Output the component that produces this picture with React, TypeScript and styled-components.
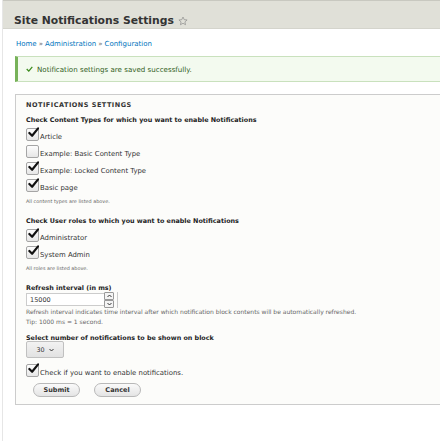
import styled, { createGlobalStyle } from "styled-components";

const GlobalStyle = createGlobalStyle`
  html, body {
    margin: 0;
    padding: 0;
    overflow: hidden;
    background: #ffffff;
  }
  body {
    font-family: "DejaVu Sans", "Liberation Sans", sans-serif;
    color: #333;
  }
`;

const Page = styled.div`
  width: 438px;
  overflow: hidden;
  border-left: 1px solid #e6e6e6;
  margin-left: 2px;
  min-height: 441px;
`;

const Header = styled.div`
  background: #e0e0d8;
  border-top: 1px solid #c8c8c0;
  border-bottom: 1px solid #d4d4cc;
  height: 29px;
  display: flex;
  align-items: center;
  padding: 12px 0 0 14px;
  box-sizing: border-box;
  margin-left: -3px;
`;

const Title = styled.h1`
  margin: 0;
  font-size: 10.8px;
  font-weight: bold;
  color: #333;
  display: flex;
  align-items: center;
  gap: 4px;
`;

const Breadcrumb = styled.div`
  margin: 11px 0 0 13px;
  font-size: 7px;
  color: #0074bd;
  display: flex;
  gap: 2px;
  span.sep {
    color: #666;
  }
`;

const Message = styled.div`
  margin: 8px -4px 0 12px;
  height: 26px;
  box-sizing: border-box;
  background: #f3faef;
  border: 1px solid #c9e1bd;
  border-left: 3px solid #77b259;
  display: flex;
  align-items: center;
  padding-left: 8px;
  font-size: 7.1px;
  color: #325e1c;
  gap: 4px;
`;

const Fieldset = styled.fieldset`
  margin: 12px -4px 0 12px;
  padding: 6px 0 8px 10px;
  border: 1px solid #ccc;
  background: #fcfcfa;
  height: 311px;
  box-sizing: border-box;
`;

const Legend = styled.div`
  font-size: 6.5px;
  font-weight: bold;
  text-transform: uppercase;
  letter-spacing: 0.5px;
  color: #333;
  margin-bottom: 7px;
`;

const Label = styled.div`
  font-size: 6.4px;
  font-weight: bold;
  color: #222;
`;

const Group = styled.div<{ gap?: number }>`
  margin-bottom: ${(p) => p.gap ?? 10}px;
`;

const CheckRow = styled.label`
  display: flex;
  align-items: flex-end;
  height: 17px;
  font-size: 6.9px;
  color: #333;
`;

const Box = styled.span`
  position: relative;
  width: 11px;
  height: 11px;
  border: 1px solid #a5a5a5;
  border-radius: 2px;
  background: linear-gradient(#fdfdfd, #e6e6e6);
  margin-right: 1px;
  flex-shrink: 0;
`;

const Tick = styled.svg`
  position: absolute;
  left: 1px;
  top: -2px;
`;

const Desc = styled.div`
  font-size: 4.9px;
  color: #666;
  margin-top: 6px;
`;

const Help = styled.div`
  font-size: 6px;
  color: #666;
  line-height: 10px;
`;

const NumberWrap = styled.div`
  display: flex;
  align-items: center;
  height: 13px;
  margin: 1px 0 1px;
`;

const NumberInput = styled.div`
  width: 74px;
  height: 11px;
  border: 1px solid #ccc;
  background: #fff;
  font-size: 6.5px;
  color: #333;
  display: flex;
  align-items: center;
  padding-left: 3px;
`;

const Spinner = styled.div`
  display: flex;
  flex-direction: column;
  margin-left: -1px;
  border-right: 1px solid #ccc;
  padding-right: 3px;
`;

const SpinBtn = styled.div`
  width: 8px;
  height: 6px;
  border: 1px solid #999;
  border-radius: 1px;
  background: #f4f4f4;
  display: flex;
  align-items: center;
  justify-content: center;
`;

const SelectBox = styled.div`
  width: 36px;
  height: 15px;
  border: 1px solid #c0c0c0;
  border-radius: 2px;
  background: linear-gradient(#f2f2f2, #e2e2e2);
  font-size: 6.4px;
  color: #333;
  display: flex;
  align-items: center;
  justify-content: center;
  gap: 4px;
  margin-top: -1px;
`;

const Actions = styled.div`
  display: flex;
  gap: 14px;
  padding-left: 7px;
  margin-top: 6px;
`;

const Button = styled.div`
  width: 45px;
  height: 12px;
  border: 1px solid #b8b8b8;
  border-radius: 8px;
  background: linear-gradient(#fafafa, #e4e4e4);
  font-size: 6.5px;
  font-weight: bold;
  color: #333;
  display: flex;
  align-items: center;
  justify-content: center;
`;

function Check({ checked, label }: { checked: boolean; label: string }) {
  return (
    <CheckRow>
      <Box>
        {checked && (
          <Tick width="11" height="11" viewBox="0 0 12 12">
            <path d="M1.5 6.5 L4.5 9.5 L11 1.5" fill="none" stroke="#111" strokeWidth="2.4" strokeLinecap="round" strokeLinejoin="round" />
          </Tick>
        )}
      </Box>
      <span>{label}</span>
    </CheckRow>
  );
}

function Star() {
  return (
    <svg width="10" height="10" viewBox="0 0 24 24">
      <path d="M12 2.5l2.9 6.3 6.9.7-5.2 4.6 1.5 6.8L12 17.4 5.9 20.9l1.5-6.8L2.2 9.5l6.9-.7z" fill="none" stroke="#888" strokeWidth="1.6" strokeLinejoin="round" />
    </svg>
  );
}

function Chevron({ up }: { up?: boolean }) {
  return (
    <svg width="5" height="4" viewBox="0 0 10 8">
      <path d={up ? "M1 6 L5 2 L9 6" : "M1 2 L5 6 L9 2"} fill="none" stroke="#222" strokeWidth="1.8" />
    </svg>
  );
}

export default function App() {
  return (
    <>
      <GlobalStyle />
      <Page>
        <Header>
          <Title>
            Site Notifications Settings <Star />
          </Title>
        </Header>
        <Breadcrumb>
          <span>Home</span>
          <span className="sep">»</span>
          <span>Administration</span>
          <span className="sep">»</span>
          <span>Configuration</span>
        </Breadcrumb>
        <Message>
          <svg width="7" height="6" viewBox="0 0 10 8">
            <path d="M1 4 L4 7 L9 1" fill="none" stroke="#3a8a1c" strokeWidth="1.8" />
          </svg>
          Notification settings are saved successfully.
        </Message>
        <Fieldset>
          <Legend>Notifications Settings</Legend>
          <Group gap={13}>
            <Label>Check Content Types for which you want to enable Notifications</Label>
            <Check checked label="Article" />
            <Check checked={false} label="Example: Basic Content Type" />
            <Check checked label="Example: Locked Content Type" />
            <Check checked label="Basic page" />
            <Desc>All content types are listed above.</Desc>
          </Group>
          <Group gap={13}>
            <Label>Check User roles to which you want to enable Notifications</Label>
            <Check checked label="Administrator" />
            <Check checked label="System Admin" />
            <Desc>All roles are listed above.</Desc>
          </Group>
          <Group gap={7}>
            <Label>Refresh interval (in ms)</Label>
            <NumberWrap>
              <NumberInput>15000</NumberInput>
              <Spinner>
                <SpinBtn>
                  <Chevron up />
                </SpinBtn>
                <SpinBtn>
                  <Chevron />
                </SpinBtn>
              </Spinner>
            </NumberWrap>
            <Help>Refresh interval indicates time interval after which notification block contents will be automatically refreshed.</Help>
            <Help>Tip: 1000 ms = 1 second.</Help>
          </Group>
          <Group gap={2}>
            <Label>Select number of notifications to be shown on block</Label>
            <SelectBox>
              30 <Chevron />
            </SelectBox>
          </Group>
          <Check checked label="Check if you want to enable notifications." />
          <Actions>
            <Button>Submit</Button>
            <Button>Cancel</Button>
          </Actions>
        </Fieldset>
      </Page>
    </>
  );
}
